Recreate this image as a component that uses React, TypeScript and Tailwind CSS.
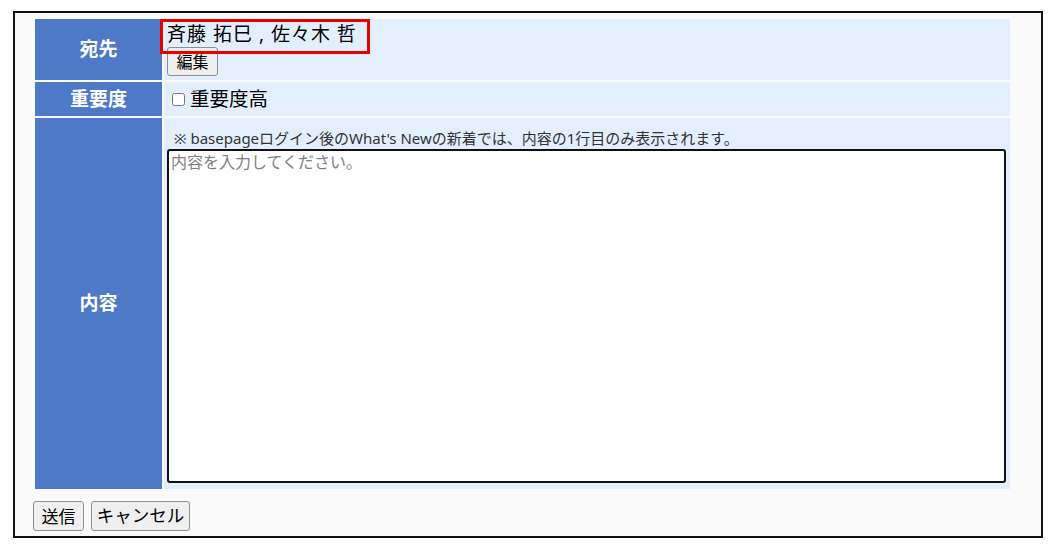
import React from "react";

const font = { fontFamily: '"Noto Sans", "Noto Sans CJK JP", sans-serif' };

export default function App() {
  return (
    <div className="w-[1059px] h-[548px] bg-white pt-[11px] pl-[13px]" style={font}>
      <div className="relative w-[1030px] h-[527px] border-2 border-[#111] bg-[#fafafa] pt-[6px] pl-[20px]">
        <div className="grid grid-cols-[127px_846px] grid-rows-[61px_34px_371px] gap-[2px]">
          {/* 宛先 */}
          <div className="flex items-center justify-center bg-[#4d79c7] text-white text-[19px] font-bold">宛先</div>
          <div className="bg-[#e3effd] pl-[3px] pt-[4px]">
            <div className="text-[19px] leading-[23px] tracking-[1px] text-black">斉藤 拓巳 , 佐々木 哲</div>
            <button className="mt-[1px] h-[29px] w-[51px] rounded-[3px] border border-[#8f8f8f] bg-[#efefef] text-[16px] leading-none text-black">
              編集
            </button>
          </div>

          {/* 重要度 */}
          <div className="flex items-center justify-center bg-[#4d79c7] text-white text-[19px] font-bold">重要度</div>
          <div className="flex items-center bg-[#e3effd] pl-[8px]">
            <input type="checkbox" className="h-[13px] w-[13px] m-0" />
            <span className="ml-[5px] text-[19.5px] text-black">重要度高</span>
          </div>

          {/* 内容 */}
          <div className="flex items-center justify-center bg-[#4d79c7] text-white text-[19px] font-bold">内容</div>
          <div className="flex flex-col bg-[#e3effd] pl-[3px] pr-[4px] pb-[6px] pt-[10px]">
            <div className="pl-[7px] text-[15px] leading-[20px] text-[#333]">
              ※ basepageログイン後のWhat's Newの新着では、内容の1行目のみ表示されます。
            </div>
            <textarea
              className="mt-[1px] flex-1 resize-none rounded-[3px] border-2 border-[#111] bg-white px-[2px] py-0 text-[16px] leading-[22px] placeholder:text-[#808080] outline-none"
              placeholder="内容を入力してください。"
            />
          </div>
        </div>

        <div className="mt-[12px] flex gap-[7px] -ml-[2px]">
          <button className="h-[30px] w-[51px] rounded-[3px] border border-[#8f8f8f] bg-[#efefef] text-[17px] leading-none text-black">
            送信
          </button>
          <button className="h-[30px] w-[99px] rounded-[3px] border border-[#8f8f8f] bg-[#efefef] text-[17.5px] leading-none text-black">
            キャンセル
          </button>
        </div>

        {/* highlight annotation */}
        <div className="pointer-events-none absolute left-[145px] top-[6px] h-[35px] w-[210px] border-[3px] border-[#e80000]" />
      </div>
    </div>
  );
}
